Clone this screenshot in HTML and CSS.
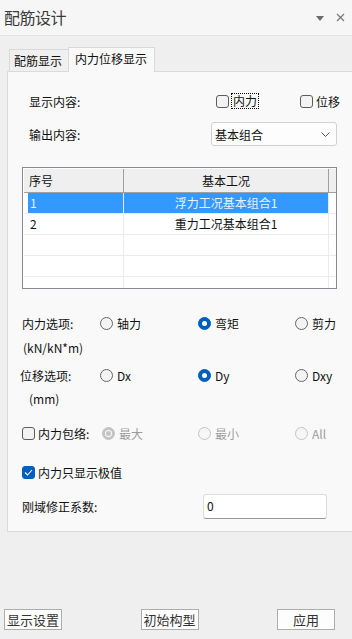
FILE: index.html
```html
<!DOCTYPE html>
<html lang="zh">
<head>
<meta charset="utf-8">
<link rel="stylesheet" href="styles.css">
</head>
<body>
<div class="app">
  <div class="titlebar">
    <span class="title">配筋设计</span>
    <div class="title-icons">
      <svg class="ico-drop" width="8" height="5" viewBox="0 0 8 5"><polygon points="0,0 8,0 4,5" fill="#6b6b6b"/></svg>
      <svg class="ico-close" width="9" height="9" viewBox="0 0 9 9"><path d="M1 1L8 8M8 1L1 8" stroke="#7a7a7a" stroke-width="1.3" fill="none"/></svg>
    </div>
  </div>

  <div class="tabs">
    <div class="tab">配筋显示</div>
    <div class="tab active">内力位移显示</div>
  </div>

  <div class="panel">
    <div class="row row-show">
      <span class="lbl w187">显示内容:</span>
      <label class="chk w84"><span class="box"></span><span class="txt focus">内力</span></label>
      <label class="chk"><span class="box"></span><span class="txt">位移</span></label>
    </div>

    <div class="row row-out">
      <span class="lbl w182">输出内容:</span>
      <div class="combo">
        <span>基本组合</span>
        <svg width="9" height="5" viewBox="0 0 9 5"><polyline points="0.5,0.5 4.5,4.5 8.5,0.5" stroke="#555" stroke-width="1" fill="none"/></svg>
      </div>
    </div>

    <div class="grid">
      <div class="grid-head">
        <div class="c1">序号</div>
        <div class="c2">基本工况</div>
        <div class="c3"></div>
      </div>
      <div class="grid-row sel">
        <div class="c1">1</div>
        <div class="c2">浮力工况基本组合1</div>
        <div class="c3"></div>
      </div>
      <div class="grid-row">
        <div class="c1">2</div>
        <div class="c2">重力工况基本组合1</div>
        <div class="c3"></div>
      </div>
      <div class="grid-row"><div class="c1"></div><div class="c2"></div><div class="c3"></div></div>
      <div class="grid-row"><div class="c1"></div><div class="c2"></div><div class="c3"></div></div>
      <div class="grid-row"><div class="c1"></div><div class="c2"></div><div class="c3"></div></div>
    </div>

    <div class="row row-force">
      <span class="lbl w78">内力选项:</span>
      <label class="rad w98"><span class="dot"></span><span>轴力</span></label>
      <label class="rad w97"><span class="dot on"></span><span>弯矩</span></label>
      <label class="rad"><span class="dot"></span><span>剪力</span></label>
    </div>
    <div class="row row-unit1"><span class="clip">(kN/kN*m)</span></div>

    <div class="row row-disp">
      <span class="lbl w80">位移选项:</span>
      <label class="rad w98"><span class="dot"></span><span>Dx</span></label>
      <label class="rad w97"><span class="dot on"></span><span>Dy</span></label>
      <label class="rad"><span class="dot"></span><span>Dxy</span></label>
    </div>
    <div class="row row-unit2"><span>(mm)</span></div>

    <div class="row row-env">
      <label class="chk w80"><span class="box"></span><span class="txt">内力包络:</span></label>
      <label class="rad dis w96"><span class="dot on"></span><span>最大</span></label>
      <label class="rad dis w97"><span class="dot"></span><span>最小</span></label>
      <label class="rad dis"><span class="dot"></span><span>All</span></label>
    </div>

    <div class="row row-ext">
      <label class="chk"><span class="box checked"><svg width="9" height="7" viewBox="0 0 9 7"><polyline points="1,3.5 3.5,6 8,1" stroke="#fff" stroke-width="1.1" fill="none"/></svg></span><span class="txt">内力只显示极值</span></label>
    </div>

    <div class="row row-rigid">
      <span class="lbl w181">刚域修正系数:</span>
      <div class="input">0</div>
    </div>
  </div>

  <div class="buttons">
    <div class="btn">显示设置</div>
    <div class="btn">初始构型</div>
    <div class="btn">应用</div>
  </div>
</div>
</body>
</html>
```

FILE: styles.css
```css
* { box-sizing: border-box; }
html, body { margin: 0; padding: 0; }
body {
  width: 352px;
  height: 639px;
  overflow: hidden;
  background: #efefef;
  font-family: "Noto Sans CJK SC", "Noto Sans", sans-serif;
  font-size: 12px;
  color: #111;
}
.app {
  height: 639px;
  display: flex;
  flex-direction: column;
}
.titlebar {
  height: 36px;
  background: #f6f6f6;
  border-bottom: 1px solid #e3e3e3;
  display: flex;
  align-items: center;
  justify-content: space-between;
  padding: 0 7px 1px 4px;
}
.title {
  font-size: 16px;
  color: #3a3a3a;
  letter-spacing: -0.5px;
}
.title-icons {
  display: flex;
  align-items: center;
  gap: 12px;
}
.ico-drop { margin-top: 2px; }

.tabs {
  display: flex;
  align-items: flex-end;
  margin-top: 11px;
  padding-left: 9px;
  height: 24px;
  position: relative;
  z-index: 1;
}
.tab {
  height: 22px;
  width: 59px;
  border: 1px solid #d9d9d9;
  border-bottom: none;
  border-right: none;
  background: #f0f0f0;
  padding-left: 4px;
  line-height: 22px;
  color: #111;
}
.tab.active {
  height: 25px;
  width: 87px;
  margin-bottom: -1px;
  background: #f9f9f9;
  border-right: 1px solid #d9d9d9;
  padding-left: 6px;
  line-height: 22px;
}

.panel {
  margin-left: 7px;
  background: #f9f9f9;
  border: 1px solid #dadada;
  border-right: none;
  display: flex;
  flex-direction: column;
  padding-bottom: 12px;
}
.row {
  display: flex;
  align-items: center;
  white-space: nowrap;
}
.lbl { display: inline-block; }
.w187 { width: 187px; }
.w182 { width: 182px; }
.w181 { width: 181px; }
.w84 { width: 84px; }
.w78 { width: 78px; }
.w80 { width: 80px; }
.w96 { width: 96px; }
.w97 { width: 97px; }
.w98 { width: 98px; }

.row-show { margin-top: 18px; height: 22px; padding-left: 21px; }
.row-out { margin-top: 10px; height: 24px; padding-left: 21px; }
.row-force { margin-top: 24px; height: 20px; padding-left: 14px; }
.row-unit1 { margin-top: 4px; height: 20px; padding-left: 15px; }
.row-disp { margin-top: 8px; height: 20px; padding-left: 12px; }
.row-unit2 { margin-top: 3px; height: 20px; padding-left: 21px; }
.row-env { margin-top: 15px; height: 20px; padding-left: 14px; }
.row-ext { margin-top: 19px; height: 20px; padding-left: 14px; }
.row-rigid { margin-top: 12px; height: 25px; padding-left: 14px; }

.clip {
  display: inline-block;
  width: 61px;
  overflow: hidden;
}

.chk {
  display: flex;
  align-items: center;
}
.box {
  width: 13px;
  height: 13px;
  border: 1px solid #5c5c5c;
  border-radius: 3px;
  background: #f3f3f3;
  margin-right: 3px;
  display: flex;
  align-items: center;
  justify-content: center;
}
.box.checked {
  background: #005fb8;
  border-color: #005fb8;
}
.txt.focus {
  outline: 1px dotted #000;
  outline-offset: 0;
  padding: 0 1px;
  line-height: 14px;
}

.rad {
  display: flex;
  align-items: center;
}
.dot {
  width: 13px;
  height: 13px;
  border-radius: 50%;
  border: 1px solid #666;
  background: #f3f3f3;
  margin-right: 4px;
  position: relative;
}
.dot.on {
  background: #005fb8;
  border-color: #005fb8;
}
.dot.on::after {
  content: "";
  position: absolute;
  left: 3px;
  top: 3px;
  width: 5px;
  height: 5px;
  border-radius: 50%;
  background: #fff;
}
.rad.dis { color: #9d9d9d; }
.rad.dis .dot {
  border-color: #c3c3c3;
  background: #f6f6f6;
}
.rad.dis .dot.on {
  background: #c4c4c4;
  border-color: #c4c4c4;
}
.rad.dis .dot.on::after {
  background: #c4c4c4;
  box-shadow: 0 0 0 1px #fafafa;
}

.combo {
  width: 126px;
  height: 24px;
  background: #fdfdfd;
  border: 1px solid #d0d0d0;
  border-radius: 3px;
  display: flex;
  align-items: center;
  justify-content: space-between;
  padding: 0 6px 0 3px;
}

.grid {
  margin-top: 21px;
  margin-left: 14px;
  width: 315px;
  height: 122px;
  border: 1px solid #868990;
  background: #fff;
  padding: 1px 0 0 1px;
  overflow: hidden;
}
.grid-head {
  display: flex;
  height: 24px;
  background: #efefef;
  border-bottom: 1px solid #a0a0a0;
}
.grid-head > div {
  line-height: 23px;
  border-right: 1px solid #a0a0a0;
}
.c1 { width: 100px; padding-left: 5px; flex: none; }
.c2 { width: 205px; text-align: center; flex: none; }
.c3 { flex: 1; }
.grid-head .c3 { border-right: none; background: #efefef; }
.grid-row {
  display: flex;
  height: 21px;
  border-bottom: 1px solid #ebebeb;
}
.grid-row > div {
  line-height: 20px;
  border-right: 1px solid #ebebeb;
}
.grid-row .c1 { padding-left: 6px; }
.grid-row .c3 { border-right: none; }
.grid-row.sel .c1 {
  background: linear-gradient(to right, #fff 4px, #3399ff 4px);
  color: #e8f2ff;
}
.grid-row.sel .c2 {
  background: #3399ff;
  color: #e8f2ff;
}

.input {
  width: 124px;
  height: 25px;
  background: #fff;
  border: 1px solid #dcdcdc;
  border-bottom: 1px solid #9a9a9a;
  border-radius: 3px;
  padding-left: 3px;
  line-height: 22px;
}

.buttons {
  margin-top: auto;
  display: flex;
  justify-content: space-between;
  padding: 0 17px 9px 4px;
}
.btn {
  width: 58px;
  height: 21px;
  border: 1px solid #adadad;
  background: #fdfdfd;
  text-align: center;
  line-height: 19px;
  font-size: 13px;
  color: #333;
}
```
